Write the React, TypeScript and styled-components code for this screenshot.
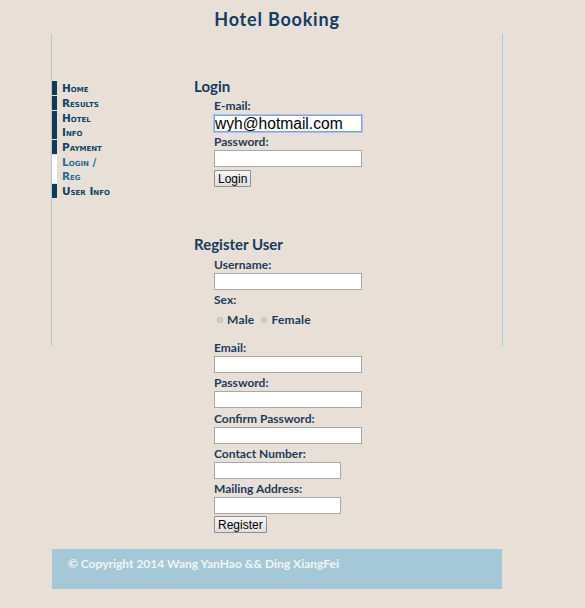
import React, { FC } from "react";
import styled, { createGlobalStyle } from "styled-components";

const GlobalStyle = createGlobalStyle`
  html, body {
    background: #e8e0d6;
  }
  body {
    margin: 8px;
    font-family: Lato, "Liberation Sans", sans-serif;
  }
`;

const Wrapper = styled.div`
  width: 452px;
  margin-left: 43px;
`;

const Title = styled.h1`
  margin: 0;
  height: 26px;
  line-height: 22px;
  text-align: center;
  font-size: 18px;
  font-weight: bold;
  letter-spacing: 0.8px;
  color: #123c68;
`;

const Main = styled.div`
  height: 312px;
  border-left: 1px solid #b9c6cc;
  border-right: 1px solid #a3cce2;
  display: flex;
  padding-top: 44px;
  box-sizing: border-box;
`;

const Nav = styled.ul`
  list-style: none;
  margin: 3px 0 0;
  padding: 0;
  width: 142px;
  flex: none;
`;

const NavItem = styled.li<{ $active?: boolean }>`
  width: 52px;
  border-left: 5px solid ${p => (p.$active ? "#ffffff" : "#0f3d57")};
  padding-left: 5px;
  margin-bottom: 1px;
  font-family: "DejaVu Sans", Verdana, sans-serif;
  font-variant: small-caps;
  font-weight: bold;
  font-size: 10.5px;
  line-height: 14px;
  color: ${p => (p.$active ? "#1d6e97" : "#0f4466")};
`;

const Content = styled.div`
  flex: 1;
  display: flex;
  flex-direction: column;
`;

const Heading = styled.h3<{ $gap?: number }>`
  margin: ${p => p.$gap ?? 0}px 0 0;
  font-size: 15px;
  font-weight: bold;
  line-height: 16px;
  color: #163a60;
`;

const Form = styled.form`
  display: flex;
  flex-direction: column;
  align-items: flex-start;
  padding-left: 20px;
`;

const Label = styled.label<{ $gap?: number }>`
  display: block;
  margin-top: ${p => p.$gap ?? 2}px;
  font-size: 12px;
  font-weight: bold;
  line-height: 16px;
  color: #1d3b5c;
`;

const TextInput = styled.input<{ $short?: boolean; $focus?: boolean }>`
  box-sizing: border-box;
  width: ${p => (p.$short ? 127 : 148)}px;
  height: 17px;
  margin: ${p => (p.$focus ? 1 : 0)}px 0 0;
  padding: 0;
  border: 1px solid ${p => (p.$focus ? "#7da2e4" : "#a9a9a9")};
  box-shadow: ${p => (p.$focus ? "0 0 0 1px #a9c2ee" : "none")};
  background: #ffffff;
  font-family: "Liberation Sans", Arial, sans-serif;
  font-size: 15.6px;
  line-height: 15px;
  color: #000;
  outline: none;
`;

const Button = styled.button<{ $gap?: number }>`
  margin-top: ${p => p.$gap ?? 3}px;
  height: 17px;
  padding: 0 3px;
  border: 1px solid #8f8f8f;
  border-radius: 1px;
  background: linear-gradient(#f6f6f6, #dedede);
  font-family: "Liberation Sans", Arial, sans-serif;
  font-size: 12px;
  line-height: 14px;
  color: #000;
`;

const RadioRow = styled.div`
  display: flex;
  align-items: center;
  margin-top: 3px;
  height: 16px;
  font-size: 12px;
  font-weight: bold;
  color: #1d3b5c;
`;

const Radio = styled.input`
  appearance: none;
  width: 6px;
  height: 6px;
  margin: 2px 4px 0 3px;
  border-radius: 50%;
  border: 1px solid #b8b8b8;
  background: #d2d2d2;
  box-sizing: border-box;
`;

const RadioText = styled.span`
  margin-right: 4px;
  letter-spacing: 0.2px;
`;

const Footer = styled.footer`
  margin: 203px 1px 0;
  height: 40px;
  background: #a5c8d8;
  padding: 7px 16px 0;
  box-sizing: border-box;
  font-size: 12px;
  font-weight: bold;
  line-height: 16px;
  color: #f2f5f2;
`;

const navItems = ["Home", "Results", "Hotel Info", "Payment", "Login / Reg", "User Info"];

const App: FC = () => (
  <>
    <GlobalStyle />
    <Wrapper>
      <Title>Hotel Booking</Title>
      <Main>
        <Nav>
          {navItems.map(item => (
            <NavItem key={item} $active={item === "Login / Reg"}>
              {item}
            </NavItem>
          ))}
        </Nav>
        <Content>
          <Heading>Login</Heading>
          <Form>
            <Label $gap={4}>E-mail:</Label>
            <TextInput $focus defaultValue="wyh@hotmail.com" />
            <Label>Password:</Label>
            <TextInput type="password" />
            <Button type="button">Login</Button>
          </Form>

          <Heading $gap={49}>Register User</Heading>
          <Form>
            <Label $gap={5}>Username:</Label>
            <TextInput />
            <Label>Sex:</Label>
            <RadioRow>
              <Radio type="radio" name="sex" />
              <RadioText>Male</RadioText>
              <Radio type="radio" name="sex" />
              <RadioText>Female</RadioText>
            </RadioRow>
            <Label $gap={13}>Email:</Label>
            <TextInput />
            <Label>Password:</Label>
            <TextInput type="password" />
            <Label $gap={3}>Confirm Password:</Label>
            <TextInput type="password" />
            <Label>Contact Number:</Label>
            <TextInput $short />
            <Label>Mailing Address:</Label>
            <TextInput $short />
            <Button type="button" $gap={2}>Register</Button>
          </Form>
        </Content>
      </Main>
      <Footer>© Copyright 2014 Wang YanHao &amp;&amp; Ding XiangFei</Footer>
    </Wrapper>
  </>
);

export default App;
